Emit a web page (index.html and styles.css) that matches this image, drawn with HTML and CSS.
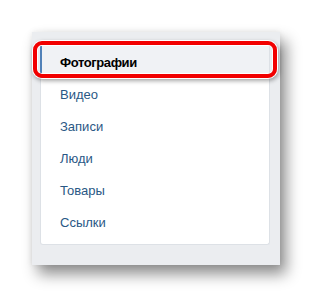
FILE: index.html
```html
<html>
  <head>
    <link rel="stylesheet" href="styles.css">
  </head>
  <body>
    <div id="panel">
      <div class="card">
        <div class="item selected">Фотографии</div>
        <div class="item">Видео</div>
        <div class="item">Записи</div>
        <div class="item">Люди</div>
        <div class="item">Товары</div>
        <div class="item">Ссылки</div>
      </div>
      <div class="highlight"></div>
    </div>
  </body>
</html>
```

FILE: styles.css
```css
body {
  font-family: "Liberation Sans", Arial, sans-serif;
  font-size: 13px;
  margin: 0;
  background: #fff;
}
#panel {
  position: relative;
  margin: 32px 0 0 32px;
  width: 248px;
  height: 233px;
  box-sizing: border-box;
  padding: 10px 10px 20px 8px;
  background: #ebedf0;
  box-shadow: 6px 9px 14px rgba(0, 0, 0, 0.45), 0 0 6px rgba(0, 0, 0, 0.08);
}
.card {
  background: #fff;
  border: 1px solid #dde1e6;
  border-top: none;
  border-radius: 0 0 3px 3px;
  padding: 4px 0 6px;
}
.item {
  height: 32px;
  box-sizing: border-box;
  padding: 2px 0 0 18px;
  line-height: 30px;
  border-left: 2px solid transparent;
  margin-left: -1px;
  color: #2a5885;
}
.item.selected {
  background: #f0f2f5;
  border-left-color: #5181b8;
  color: #000;
  font-weight: bold;
  letter-spacing: -0.4px;
}
.highlight {
  position: absolute;
  left: 1px;
  top: 9px;
  width: 244px;
  height: 37px;
  box-sizing: border-box;
  border: 4px solid #f20000;
  border-radius: 9px;
  box-shadow: 0 0 0 1px #fff, inset 0 0 0 1px #fff, 1px 2px 4px 1px rgba(0, 0, 0, 0.35);
}
```
